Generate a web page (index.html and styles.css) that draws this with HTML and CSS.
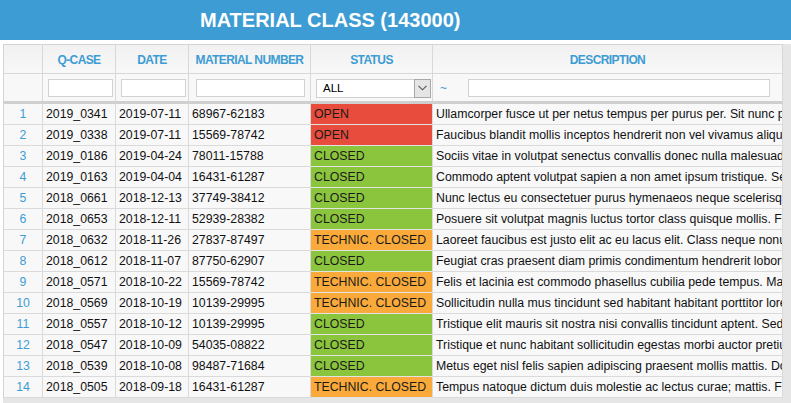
FILE: index.html
```html
<!DOCTYPE html>
<html>
<head>
<meta charset="utf-8">
<link rel="stylesheet" href="styles.css">
</head>
<body>
<div class="titlebar"><h1 class="title">MATERIAL CLASS (143000)</h1></div>
<div class="viewport">
  <div class="grid">
    <div class="row head">
      <div class="c num"></div>
      <div class="c">Q-CASE</div>
      <div class="c">DATE</div>
      <div class="c">MATERIAL NUMBER</div>
      <div class="c">STATUS</div>
      <div class="c">DESCRIPTION</div>
    </div>
    <div class="row filter">
      <div class="c num"></div>
      <div class="c"><div class="inp w-q"></div></div>
      <div class="c"><div class="inp w-d"></div></div>
      <div class="c"><div class="inp w-m"></div></div>
      <div class="c"><div class="sel"><span class="sel-text">ALL</span><span class="sel-btn"><svg width="9" height="6" viewBox="0 0 9 6"><path d="M0.5 0.8 L4.5 4.8 L8.5 0.8" fill="none" stroke="#555" stroke-width="1.1"/></svg></span></div></div>
      <div class="c desc-f"><span class="tilde">~</span><div class="inp w-desc"></div></div>
    </div>
    <div class="body">
      <div class="row"><div class="c num">1</div><div class="c">2019_0341</div><div class="c">2019-07-11</div><div class="c">68967-62183</div><div class="c st open">OPEN</div><div class="c desc">Ullamcorper fusce ut per netus tempus per purus per. Sit nunc pretium sagittis nunc.</div></div>
      <div class="row"><div class="c num">2</div><div class="c">2019_0338</div><div class="c">2019-07-11</div><div class="c">15569-78742</div><div class="c st open">OPEN</div><div class="c desc">Faucibus blandit mollis inceptos hendrerit non vel vivamus aliquam lorem.</div></div>
      <div class="row"><div class="c num">3</div><div class="c">2019_0186</div><div class="c">2019-04-24</div><div class="c">78011-15788</div><div class="c st closed">CLOSED</div><div class="c desc">Sociis vitae in volutpat senectus convallis donec nulla malesuada metus.</div></div>
      <div class="row"><div class="c num">4</div><div class="c">2019_0163</div><div class="c">2019-04-04</div><div class="c">16431-61287</div><div class="c st closed">CLOSED</div><div class="c desc">Commodo aptent volutpat sapien a non amet ipsum tristique. Sed nisi lorem.</div></div>
      <div class="row"><div class="c num">5</div><div class="c">2018_0661</div><div class="c">2018-12-13</div><div class="c">37749-38412</div><div class="c st closed">CLOSED</div><div class="c desc">Nunc lectus eu consectetuer purus hymenaeos neque scelerisque dolor.</div></div>
      <div class="row"><div class="c num">6</div><div class="c">2018_0653</div><div class="c">2018-12-11</div><div class="c">52939-28382</div><div class="c st closed">CLOSED</div><div class="c desc">Posuere sit volutpat magnis luctus tortor class quisque mollis. Felis nunc.</div></div>
      <div class="row"><div class="c num">7</div><div class="c">2018_0632</div><div class="c">2018-11-26</div><div class="c">27837-87497</div><div class="c st tech">TECHNIC. CLOSED</div><div class="c desc">Laoreet faucibus est justo elit ac eu lacus elit. Class neque nonummy.</div></div>
      <div class="row"><div class="c num">8</div><div class="c">2018_0612</div><div class="c">2018-11-07</div><div class="c">87750-62907</div><div class="c st closed">CLOSED</div><div class="c desc">Feugiat cras praesent diam primis condimentum hendrerit lobortis nisi.</div></div>
      <div class="row"><div class="c num">9</div><div class="c">2018_0571</div><div class="c">2018-10-22</div><div class="c">15569-78742</div><div class="c st tech">TECHNIC. CLOSED</div><div class="c desc">Felis et lacinia est commodo phasellus cubilia pede tempus. Mauris nunc.</div></div>
      <div class="row"><div class="c num">10</div><div class="c">2018_0569</div><div class="c">2018-10-19</div><div class="c">10139-29995</div><div class="c st tech">TECHNIC. CLOSED</div><div class="c desc">Sollicitudin nulla mus tincidunt sed habitant habitant porttitor lorem.</div></div>
      <div class="row"><div class="c num">11</div><div class="c">2018_0557</div><div class="c">2018-10-12</div><div class="c">10139-29995</div><div class="c st closed">CLOSED</div><div class="c desc">Tristique elit mauris sit nostra nisi convallis tincidunt aptent. Sed nunc.</div></div>
      <div class="row"><div class="c num">12</div><div class="c">2018_0547</div><div class="c">2018-10-09</div><div class="c">54035-08822</div><div class="c st closed">CLOSED</div><div class="c desc">Tristique et nunc habitant sollicitudin egestas morbi auctor pretium.</div></div>
      <div class="row"><div class="c num">13</div><div class="c">2018_0539</div><div class="c">2018-10-08</div><div class="c">98487-71684</div><div class="c st closed">CLOSED</div><div class="c desc">Metus eget nisl felis sapien adipiscing praesent mollis mattis. Donec.</div></div>
      <div class="row"><div class="c num">14</div><div class="c">2018_0505</div><div class="c">2018-09-18</div><div class="c">16431-61287</div><div class="c st tech">TECHNIC. CLOSED</div><div class="c desc">Tempus natoque dictum duis molestie ac lectus curae; mattis. Fusce nunc.</div></div>
    </div>
  </div>
</div>
</body>
</html>
```
FILE: styles.css
```css
* { box-sizing: border-box; }
html, body { margin: 0; padding: 0; }
body {
  width: 791px;
  height: 403px;
  overflow: hidden;
  background: #fff;
  font-family: "Liberation Sans", Arial, sans-serif;
}
.titlebar {
  height: 40px;
  background: #3d9cd3;
  padding-left: 200px;
  display: flex;
  align-items: center;
}
.title {
  margin: 0;
  color: #fff;
  font-size: 20px;
  font-weight: bold;
  letter-spacing: 0;
}
.viewport {
  margin-top: 4px;
  margin-left: 3px;
  height: 359px;
  background: #e6e6e6;
  overflow: hidden;
}
.grid {
  width: 780px;
  border-left: 1px solid #d4d4d4;
  border-top: 1px solid #d4d4d4;
}
.row {
  display: grid;
  grid-template-columns: 39px 73px 73px 122px 122px 350px;
  height: 21px;
  background: #f8f8f9;
}
.c {
  border-right: 1px solid #dadada;
  border-bottom: 1px solid #dadada;
  font-size: 12.3px;
  color: #111;
  padding-left: 2px;
  white-space: nowrap;
  overflow: hidden;
  display: flex;
  align-items: center;
}
.c.num {
  justify-content: center;
  color: #3d9cd3;
  padding-left: 0;
}
.row.head {
  height: 29px;
  background: linear-gradient(#f1f1f1, #f8f8f8);
}
.row.head .c {
  justify-content: center;
  color: #3d9cd3;
  font-weight: bold;
  font-size: 12px;
  letter-spacing: -0.6px;
  padding-left: 0;
  border-color: #d8d8d8;
  padding-top: 1px;
}
.row.filter {
  height: 30px;
  background: #f8f8f8;
}
.row.filter .c {
  border-bottom: 3px solid #cfcfcf;
  border-right-color: #d8d8d8;
  padding-left: 0;
  padding-top: 1px;
}
.inp {
  height: 18px;
  background: #fff;
  border: 1px solid #d2d2d2;
}
.w-q { width: 65px; margin-left: 5px; }
.w-d { width: 65px; margin-left: 5px; }
.w-m { width: 109px; margin-left: 7px; }
.sel {
  margin-left: 5px;
  width: 115px;
  height: 19px;
  background: #fff;
  border: 1px solid #cfcfcf;
  display: flex;
  align-items: stretch;
}
.sel-text {
  flex: 1;
  font-size: 11.5px;
  color: #000;
  padding-left: 6px;
  display: flex;
  align-items: center;
}
.sel-btn {
  width: 17px;
  background: #e5e5e5;
  border: 1px solid #a8a8a8;
  margin: -1px -1px -1px 0;
  display: flex;
  align-items: center;
  justify-content: center;
}
.desc-f { gap: 0; }
.tilde {
  color: #3d9cd3;
  font-size: 12px;
  margin-left: 7px;
  width: 28px;
}
.w-desc { width: 302px; }
.st { padding-left: 3px; color: #1a1a1a; border-bottom-color: #e3e3e3; }
.open { background: #e74c3c; }
.closed { background: #8bc43d; }
.tech { background: #f9aa3a; }
.desc { padding-left: 3px; }
.body .c:nth-child(2),
.body .c:nth-child(3),
.body .c:nth-child(4) { padding-left: 3px; }
```
